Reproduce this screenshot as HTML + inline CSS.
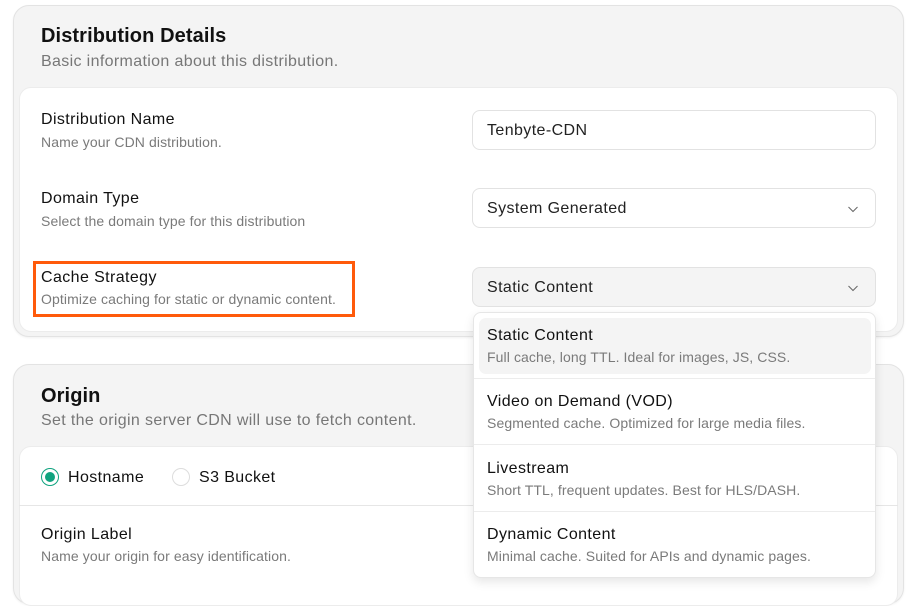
<!DOCTYPE html>
<html><head><meta charset="utf-8"><style>
*{box-sizing:border-box;margin:0;padding:0}
body{width:907px;height:590px;overflow:hidden;background:#fff;font-family:"Liberation Sans",Arial,sans-serif;color:#111;position:relative}
.a{position:absolute;white-space:nowrap}
.card{position:absolute;background:#f4f4f4;border:1px solid #e3e3e3;border-radius:16px;box-shadow:0 1px 2px rgba(0,0,0,.06)}
.inner{position:absolute;background:#fff;border-radius:12px;border:1px solid #ececec}
.t{font-size:20px;font-weight:bold;color:#111;line-height:24px;letter-spacing:0.1px}
.s{font-size:16px;color:#777;line-height:18px;letter-spacing:0.35px}
.l{font-size:16px;color:#111;line-height:18px;letter-spacing:0.4px}
.d{font-size:14px;color:#7a7a7a;line-height:16px;letter-spacing:0.1px}
.in{position:absolute;left:472px;width:404px;height:40px;border:1px solid #e2e2e2;border-radius:8px;background:#fff;font-size:16px;line-height:39px;padding-left:14px;color:#222;letter-spacing:0.4px}
.chev{position:absolute;right:16px;top:14px}
.dd{position:absolute;left:473px;top:312px;width:403px;height:266px;background:#fff;border:1px solid #e6e6e6;border-radius:8px;box-shadow:0 4px 10px rgba(0,0,0,.1)}
.sep{position:absolute;left:0;right:0;height:1px;background:#ececec}
</style></head><body>
<div class="card" style="left:13px;top:5px;width:891px;height:332px"></div>
<div class="a t" style="left:41px;top:24px">Distribution Details</div>
<div class="a s" style="left:41px;top:53px">Basic information about this distribution.</div>
<div class="inner" style="left:19px;top:87px;width:879px;height:245px"></div>
<div class="a l" style="left:41px;top:111px">Distribution Name</div>
<div class="a d" style="left:41px;top:134px">Name your CDN distribution.</div>
<div class="a l" style="left:41px;top:190px">Domain Type</div>
<div class="a d" style="left:41px;top:213px">Select the domain type for this distribution</div>
<div class="a" style="left:33px;top:261px;width:322px;height:56px;border:3px solid #ff5a0a"></div>
<div class="a l" style="left:41px;top:269px">Cache Strategy</div>
<div class="a d" style="left:41px;top:291px">Optimize caching for static or dynamic content.</div>
<div class="in" style="top:110px">Tenbyte-CDN</div>
<div class="in" style="top:188px">System Generated<svg class="chev" width="12" height="12" viewBox="0 0 12 12"><path d="M1.5 4l4.5 4.5 4.5-4.5" fill="none" stroke="#666" stroke-width="1"/></svg></div>
<div class="in" style="top:267px;background:#f4f4f4">Static Content<svg class="chev" width="12" height="12" viewBox="0 0 12 12"><path d="M1.5 4l4.5 4.5 4.5-4.5" fill="none" stroke="#666" stroke-width="1"/></svg></div>

<div class="card" style="left:13px;top:364px;width:891px;height:240px"></div>
<div class="a t" style="left:41px;top:384px">Origin</div>
<div class="a s" style="left:41px;top:412px">Set the origin server CDN will use to fetch content.</div>
<div class="inner" style="left:19px;top:446px;width:879px;height:160px"></div>
<div class="a" style="left:19px;top:505px;width:879px;height:1px;background:#e6e6e6"></div>
<div class="a" style="left:41px;top:468px;width:18px;height:18px;border-radius:50%;border:1.5px solid #10a37f"></div>
<div class="a" style="left:45px;top:472px;width:10px;height:10px;border-radius:50%;background:#10a37f"></div>
<div class="a l" style="left:68px;top:469px">Hostname</div>
<div class="a" style="left:172px;top:468px;width:18px;height:18px;border-radius:50%;border:1px solid #ddd"></div>
<div class="a l" style="left:199px;top:469px">S3 Bucket</div>
<div class="a l" style="left:41px;top:526px">Origin Label</div>
<div class="a d" style="left:41px;top:548px">Name your origin for easy identification.</div>

<div class="dd">
<div class="a" style="left:5px;top:5px;width:392px;height:56px;background:#f4f4f4;border-radius:7px"></div>
<div class="sep" style="top:65px"></div>
<div class="sep" style="top:131px"></div>
<div class="sep" style="top:198px"></div>
<div class="a l" style="left:13px;top:14px">Static Content</div>
<div class="a d" style="left:13px;top:36px">Full cache, long TTL. Ideal for images, JS, CSS.</div>
<div class="a l" style="left:13px;top:80px">Video on Demand (VOD)</div>
<div class="a d" style="left:13px;top:102px">Segmented cache. Optimized for large media files.</div>
<div class="a l" style="left:13px;top:147px">Livestream</div>
<div class="a d" style="left:13px;top:169px">Short TTL, frequent updates. Best for HLS/DASH.</div>
<div class="a l" style="left:13px;top:213px">Dynamic Content</div>
<div class="a d" style="left:13px;top:235px">Minimal cache. Suited for APIs and dynamic pages.</div>
</div>
</body></html>
